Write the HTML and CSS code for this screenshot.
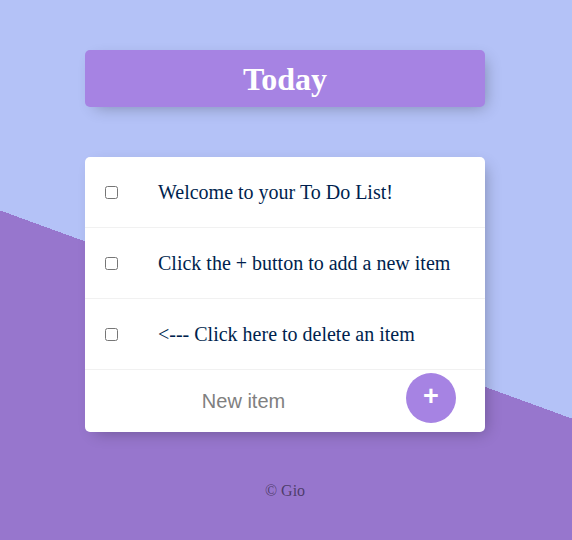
FILE: index.html
```html
<!DOCTYPE html>
<html lang="en">
<head>
<meta charset="utf-8">
<title>To Do List</title>
<link rel="stylesheet" href="styles.css">
</head>
<body>
  <div class="box heading">
    <h1 class="title">Today</h1>
  </div>
  <div class="box list">
    <div class="item">
      <input class="check" type="checkbox">
      <p class="text">Welcome to your To Do List!</p>
    </div>
    <div class="item">
      <input class="check" type="checkbox">
      <p class="text">Click the + button to add a new item</p>
    </div>
    <div class="item">
      <input class="check" type="checkbox">
      <p class="text">&lt;--- Click here to delete an item</p>
    </div>
    <form class="item new-row" onsubmit="return false">
      <input class="new-input" type="text" placeholder="New item" autocomplete="off">
      <button class="add" type="button">+</button>
    </form>
  </div>
  <footer class="footer">© Gio</footer>
</body>
</html>
```
FILE: styles.css
```css
html {
  background-color: #9776cd;
  background-image: linear-gradient(20deg, #9776cd 50%, #b4c2f7 50%);
  background-repeat: no-repeat;
  background-size: 100% 629px;
  min-height: 100%;
  font-family: "Liberation Serif", "Times New Roman", serif;
}

body {
  margin: 0;
  padding: 50px 2px 0 0;
}

.box {
  width: 400px;
  margin: 0 auto;
  background: #ffffff;
  border-radius: 5px;
  box-shadow: 5px 5px 15px -5px rgba(0, 0, 0, 0.3);
}

.heading {
  background-color: #a683e3;
  height: 57px;
  display: flex;
  align-items: center;
  justify-content: center;
}

.title {
  margin: 0;
  color: #ffffff;
  font-size: 32px;
  font-weight: bold;
  line-height: 37px;
  padding-top: 1px;
}

.list {
  margin-top: 50px;
}

.item {
  min-height: 70px;
  display: flex;
  align-items: center;
  border-bottom: 1px solid #f1f1f1;
}

.new-row {
  border-bottom: 0;
  min-height: 62px;
  height: 62px;
  margin: 0;
  align-items: flex-start;
}

.check {
  margin: 0 20px;
  width: 13px;
  height: 13px;
  flex: none;
}

.text {
  margin: 0;
  padding: 0 20px;
  font-size: 20px;
  color: #001f4e;
  line-height: 23px;
}

.new-input {
  box-sizing: border-box;
  width: 317px;
  height: 62px;
  padding: 1px 2px 0;
  border: none;
  background: transparent;
  text-align: center;
  font-family: "Liberation Sans", Arial, sans-serif;
  font-size: 20px;
  color: #333333;
  flex: none;
  margin: 0;
}

.new-input::placeholder {
  color: #808080;
  opacity: 1;
}

.new-input:focus {
  outline: none;
}

.add {
  margin: 3px 0 0 4px;
  width: 50px;
  height: 50px;
  border-radius: 50%;
  border: 0;
  background-color: #a683e3;
  color: #ffffff;
  font-family: "Liberation Sans", Arial, sans-serif;
  font-size: 27px;
  font-weight: bold;
  line-height: 1;
  padding: 0 0 3px 0;
  flex: none;
  display: flex;
  align-items: center;
  justify-content: center;
}

.footer {
  margin-top: 50px;
  text-align: center;
  color: rgba(0, 0, 0, 0.5);
  font-size: 16px;
  line-height: 18px;
}
```
